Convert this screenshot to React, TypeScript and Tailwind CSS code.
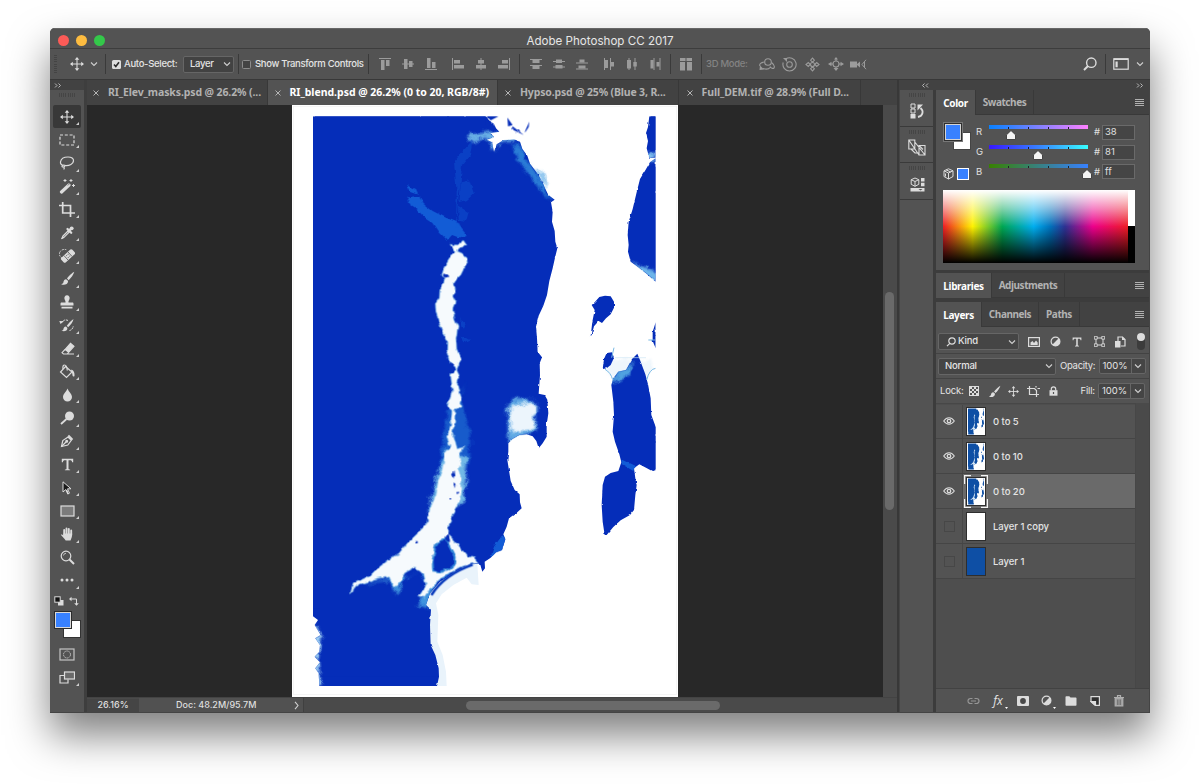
import React from "react";

const NAME = "font-['Noto_Sans',sans-serif] font-bold";

/* ---------- small drawing helpers ---------- */
type IconProps = { w?: number; h?: number; vb?: string; c?: string; sw?: number; children: React.ReactNode };
function Ico({ w = 16, h = w, vb, c = "#dcdcdc", sw = 1.2, children }: IconProps) {
  return (
    <svg width={w} height={h} viewBox={vb ?? `0 0 ${w} ${h}`} fill="none" stroke={c} strokeWidth={sw} className="block shrink-0">
      {children}
    </svg>
  );
}

const Chevron = () => (
  <Ico w={8} h={6} sw={1.1} c="#cfcfcf"><path d="M1 1.5 4 4.5 7 1.5" /></Ico>
);
const Sep = () => <div className="h-5 w-px shrink-0 bg-[#3a3a3a]" />;
const Grip = () => (
  <div className="flex h-[4px] w-[17px] justify-between">
    {Array.from({ length: 8 }, (_, i) => <div key={i} className="h-full w-px bg-[#454545]" />)}
  </div>
);
const DoubleAngle = ({ left = false }: { left?: boolean }) => (
  <Ico w={8} h={5} c="#b8b8b8" sw={1}>
    {left ? <path d="M3.5.5l-2 2 2 2M7 .5l-2 2 2 2" /> : <path d="M1 .5l2 2-2 2M4.500 .5l2 2-2 2" />}
  </Ico>
);
const MenuLines = () => (
  <div className="flex h-[7px] w-[9px] flex-col justify-between">
    {[0, 1, 2, 3].map((i) => <div key={i} className="h-px bg-[#b0b0b0]" />)}
  </div>
);

function MoveIcon({ s = 14 }: { s?: number }) {
  return (
    <Ico w={s} vb="0 0 14 14" sw={1.1}>
      <path d="M7 2v10M2 7h10" />
      <path d="M7 0l2.300 2.800H4.700zM7 14l2.300-2.800H4.700zM0 7l2.800-2.300v4.600zM14 7l-2.800-2.300v4.600z" fill="#dcdcdc" stroke="none" />
    </Ico>
  );
}
function BrushIcon({ s = 15 }: { s?: number }) {
  return (
    <Ico w={s} vb="0 0 15 15" sw={0}>
      <path d="M14.300.8c-2 .9-5.600 4.300-7.300 6.800l1.700 1.600C11 7.300 13.700 3.200 14.300.8zM6.200 8.300C4.300 8.500 3.600 9.700 3.400 11.300c-.1 1-.9 1.500-2.200 1.900 2.300 1.400 6.900.6 6.900-3.200z" fill="#dcdcdc" />
    </Ico>
  );
}
function TypeIcon({ s = 13 }: { s?: number }) {
  return (
    <Ico w={s} vb="0 0 13 13" sw={0}>
      <path d="M.8.8h11.400v3.400h-1.100c-.2-1.500-.7-2-2-2H7.500v8.200c0 .7.300.9 1.600 1v.9H3.900v-.9c1.300-.1 1.600-.3 1.600-1V2.200H3.900c-1.300 0-1.800.5-2 2H.8z" fill="#dcdcdc" />
    </Ico>
  );
}
const AdjustIcon = () => (
  <Ico w={11}><circle cx="5.500" cy="5.500" r="4.400" /><path d="M8.700 2.300A4.500 4.500 0 0 1 2.300 8.700z" fill="#dcdcdc" stroke="none" /></Ico>
);
const Eye = () => (
  <Ico w={12} h={8} sw={1.1}>
    <path d="M.7 4C2.400 1.700 4 .8 6 .8s3.600.9 5.300 3.200C9.600 6.300 8 7.200 6 7.200S2.400 6.300.7 4z" />
    <circle cx="6" cy="4" r="1.700" fill="#4a4a4a" strokeWidth="1.300" />
  </Ico>
);

/* ---------- elevation map ---------- */
const COAST =
  "M69 34H588L597 46 612 56 618 70 628 80 600 84 612 96 590 104 606 112 612 140 620 118 640 106 672 104 690 110 697 132 712 152 720 176 732 192 745 210 757 232 765 250 775 270 794 284 783 292 788 320 786 350 794 378 796 410 802 430 795 458 788 490 778 528 771 570 760 602 746 632 738 665 741 700 743 740 756 757 749 775 750 810 746 866 764 870 772 884 775 925 770 960 770 995 758 1015 746 1030 739 1008 728 994 710 988 688 990 667 1002 655 1015 655 1040 652 1065 656 1090 662 1128 674 1155 689 1168 690 1192 695 1210 682 1222 657 1240 650 1265 640 1288 646 1303 636 1335 618 1342 600 1360 584 1370 585 1390 577 1400 570 1376 545 1378 500 1398 450 1430 420 1465 408 1500 423 1514 420 1560 422 1620 436 1650 446 1690 447 1715 441 1743H88L86 1705 76 1690 90 1672 74 1655 88 1640 90 1620 76 1600 92 1590 74 1560 84 1545 69 1534Z";
const EAST = [
  "M1078 34H1097V158H1078L1070 130 1074 108 1068 84 1074 66Z",
  "M1097 160L1080 172 1066 196 1050 222 1040 262 1028 312 1016 350 1013 390 1016 420 1014 440 1022 470 1044 486 1070 506 1097 530Z",
  "M914 592L928 576 945 572 962 574 972 590 972 608 962 628 948 640 936 654 926 648 912 664 905 690 902 694 907 650 914 615 905 600Z",
  "M1097 652L1088 680 1088 708 1097 730Z",
  "M938 792L942 762 950 744 966 742 972 758 962 780 950 790Z",
  "M970 820L985 800 1008 795 1026 762 1042 746 1050 765 1066 808 1074 838 1082 880 1084 930 1097 965V1096L1086 1098 1068 1088 1048 1078 1032 1090 1036 1120 1040 1140 1036 1170 1032 1215 1020 1230 992 1246 970 1266 950 1290 944 1290 938 1250 935 1200 938 1140 945 1115 962 1104 985 1098 994 1072 988 1048 975 1010 968 980 972 930 970 890 964 840Z",
];
const RIVER = [
  "M480 418L500 420 520 406 530 420 512 430 500 438 515 444 530 458 532 476 522 490 512 510 500 522 490 538 496 566 488 574 496 590 488 610 494 640 504 664 498 700 500 730 512 765 504 784 500 795 508 812 502 840 508 868 514 890 512 908 495 912 494 950 488 982 496 1010 502 1032 528 1025 508 1048 514 1080 506 1090 512 1110 514 1170 506 1192 488 1225 478 1256 474 1288 486 1300 506 1322 532 1354 552 1358 566 1374 545 1376 510 1386 480 1402 448 1424 420 1452 404 1478 386 1472 408 1440 402 1410 376 1386 344 1404 326 1440 310 1446 298 1416 262 1420 236 1430 200 1440 180 1468 190 1436 240 1412 262 1390 300 1362 326 1346 352 1314 384 1284 410 1256 420 1210 438 1170 444 1130 456 1094 466 1040 480 1024 470 995 482 960 486 916 472 906 478 884 488 862 482 810 496 796 492 784 472 760 474 712 460 688 446 652 438 620 436 596 448 580 450 546 466 522 456 508 464 482 480 456 496 440Z",
];

function Terrain({ fill, river = "#f8fbfe" }: { fill: string; river?: string }) {
  return (
    <>
      <path d={COAST} fill={fill} />
      {EAST.map((d, i) => <path key={i} d={d} fill={fill} />)}
      {RIVER.map((d, i) => <path key={i} d={d} fill={river} />)}
    </>
  );
}

function ElevationMap() {
  return (
    <svg width="386" height="592" viewBox="6 0 1158 1776" className="block bg-white">
      <defs>
        <filter id="rough" x="0" y="0" width="1170" height="1776" filterUnits="userSpaceOnUse" colorInterpolationFilters="sRGB">
          <feTurbulence type="fractalNoise" baseFrequency="0.05" numOctaves="3" seed="4" result="n" />
          <feDisplacementMap in="SourceGraphic" in2="n" scale="13" xChannelSelector="R" yChannelSelector="G" />
        </filter>
        <filter id="coast" x="0" y="0" width="1170" height="1776" filterUnits="userSpaceOnUse" colorInterpolationFilters="sRGB">
          <feTurbulence type="fractalNoise" baseFrequency="0.06" numOctaves="2" seed="4" result="n" />
          <feDisplacementMap in="SourceGraphic" in2="n" scale="7" xChannelSelector="R" yChannelSelector="G" />
        </filter>
        <filter id="haze" x="0" y="0" width="1170" height="1776" filterUnits="userSpaceOnUse" colorInterpolationFilters="sRGB">
          <feGaussianBlur stdDeviation="5" result="b" />
          <feTurbulence type="fractalNoise" baseFrequency="0.04" numOctaves="3" seed="8" result="n" />
          <feDisplacementMap in="b" in2="n" scale="26" xChannelSelector="R" yChannelSelector="G" />
        </filter>
        <clipPath id="frame"><rect x="69" y="34" width="1028" height="1709" /></clipPath>
        <clipPath id="land"><path d={COAST} />{EAST.map((d, i) => <path key={i} d={d} />)}</clipPath>
      </defs>
      <rect x="10" y="4" width="1150" height="1764" stroke="#f0f0f0" strokeWidth="2" fill="none" />
      <g clipPath="url(#frame)">
        <path d="M408 1500L425 1465 455 1430 500 1400 545 1380 562 1378 566 1440 545 1438 530 1418 490 1440 455 1468 438 1495 445 1530 442 1610 458 1650 468 1700 470 1743H430L440 1700 420 1620Z" fill="#e9f3fb" />
        <path d="M958 762L1085 764 1090 790 1072 815H965L948 795Z" fill="#eef6fc" filter="url(#haze)" />
        <path d="M700 150L730 185 750 225 768 262 764 214 742 194 716 172Z" fill="#8cc4ee" filter="url(#haze)" />
        <g filter="url(#coast)">
          <path d={COAST} fill="#052db9" />
          {EAST.map((d, i) => <path key={i} d={d} fill="#052db9" />)}
        </g>
        {/* straight survey edges stay crisp */}
        <path d="M69 34H586V60H69ZM69 34H90V1510H69ZM92 1715H438V1743H92ZM1082 34H1097V135H1082ZM1085 185H1097V505H1085ZM1090 965H1097V1092H1090Z" fill="#052db9" />
        <g clipPath="url(#land)">
          {/* mid-depth shelves */}
          <g filter="url(#rough)" fill="#125cd6">
            <path d="M350 292L358 276 392 272 400 296 428 318 468 338 498 350 530 390 508 398 486 390 472 406 450 384 430 354 400 334 376 308Z" />
            <path d="M350 240L378 252 384 266 360 258Z" />
            <path d="M512 232L538 226 552 266 530 286 508 292ZM504 302L536 322 528 350 506 348ZM512 640L530 656 522 674 510 664ZM512 690L540 706 520 716Z" opacity=".4" />
            <path d="M492 170L530 125 548 105 540 150 516 180 512 230 504 290 500 340 512 370 498 366 500 260Z" opacity=".4" />
            <path d="M600 1360L612 1325 640 1286 650 1310 636 1340Z" />
            <path d="M994 1062L1036 1082 1030 1098 996 1078Z" />
          </g>
          {/* pale shoals */}
          <g filter="url(#haze)">
            <path d="M530 92L545 110 590 98 602 118 612 140 625 112 690 104 688 90 600 80Z" fill="#6bb2e6" />
            <path d="M668 116L700 126 716 176 740 196 768 246 780 286 760 266 736 232 704 196 680 156Z" fill="#2a7cd6" />
            <path d="M470 920L450 1080 420 1230 470 1260 540 1060 540 980 510 880 530 830 500 890Z" fill="#1b66d0" opacity=".8" />
            <path d="M190 1440L300 1425 320 1470 350 1410 400 1400 410 1450 380 1500 420 1510 440 1430 480 1400 530 1360 500 1380Z" fill="#3f93de" />
            <path d="M474 1030L450 1090 424 1180 415 1240 450 1210 522 1190 532 1060Z" fill="#71b8e6" />
            <path d="M652 905L668 880 740 885 738 982 655 1012Z" fill="#5fa9e4" />
            <path d="M660 905L736 890 732 974 662 982Z" fill="#ecf5fc" />
            <path d="M958 832L986 796 1026 768 1016 812 990 826Z" fill="#50a2e0" />
            <path d="M1022 474L1097 548V498Z" fill="#6db6ea" />
            <path d="M60 1530L96 1600 84 1660 94 1743H60Z" fill="#9ccdf2" />
            <path d="M1066 145H1100V172H1076Z" fill="#7dbcec" />
          </g>
          <g filter="url(#rough)">
            {RIVER.map((d, i) => <path key={i} d={d} fill="#f6fafd" stroke="#7cbbe9" strokeWidth="2" />)}
            <path d="M592 32H700L690 50 706 64 694 96 660 92 640 104 612 100 632 80 610 58Z" fill="#fff" />
          </g>
          <g filter="url(#rough)" fill="#052db9">
            <path d="M430 1400L428 1370 436 1325 450 1305 466 1302 480 1328 494 1356 492 1378 476 1392 450 1402Z" stroke="#3387d8" strokeWidth="6" />
            <path d="M464 1294l12-4 4 16-12 4zM458 512q12-12 20 2l-8 8zM376 1308h7v7h-7z" />
            <path d="M486 1108l8-8 2 12-4 8zM490 1136l7 3-4 7zM478 1180h6v4h-6zM500 1160l5 6-6 4z" />
          </g>
        </g>
        <path d="M424 1470Q464 1408 548 1379" stroke="#0b3cbc" strokeWidth="8" fill="none" />
        <g filter="url(#coast)" fill="#052db9">
          <path d="M706 76L718 50 716 66 704 84ZM652 38L668 60 654 64ZM590 34H625L602 46ZM668 64L702 90 664 72Z" />
        </g>
        <path d="M740 192L768 208 770 240 750 224" fill="none" stroke="#a9d3f2" strokeWidth="2" />
        <path d="M965 758L972 728M1070 825Q1078 792 1097 790M945 793Q962 802 968 824M1075 705H1096" fill="none" stroke="#7ab9e4" strokeWidth="3" />
        <path d="M975 758H1068" stroke="#cfe5f5" strokeWidth="2" />
      </g>
    </svg>
  );
}

/* ---------- tools ---------- */
const G = "#dcdcdc";
const TOOLS: { name: string; el: React.ReactNode; tri?: boolean }[] = [
  { name: "move", el: <MoveIcon /> },
  { name: "marquee", el: <Ico w={16} h={12}><rect x="1" y="1" width="14" height="10" strokeDasharray="3 1.800" /></Ico> },
  { name: "lasso", el: <Ico w={16} h={14}><path d="M4.500 9.500C2 8.800 1.200 7.500 1.500 5.800 2 3 5 1 9 1c3.500 0 5.700 1.500 5.500 3.900C14.300 8 10.500 9.800 6.500 9.600 5.500 9 3 8.800 3 10.200c0 1.300 2.500 1 3-.6M4.500 10.800c1 .8 1 1.700.2 2.700" /></Ico> },
  { name: "wand", el: <Ico w={16} h={15}><path d="M2.500 13 10 6" strokeWidth="3.200" strokeLinecap="round" /><path d="M8.800 6.500 11 4.300" stroke="#535353" strokeWidth=".7" /><path d="M12 0v3M10.500 1.500h3M6 0v3M4.500 1.500h3M14.500 5v3M13 6.500h3" strokeWidth="1" /></Ico> },
  { name: "crop", el: <Ico w={16} h={15} sw={1.7}><path d="M3.700 0v11H16M0 3.500h11.500V15" /></Ico> },
  { name: "eyedropper", el: <Ico w={14} h={14}><path d="M8.500 4.500 3 10c-.6.700-.3 1.700-1.700 2.800C2.300 12 3.600 11.800 4.200 11.200L9.700 5.700" /><path d="M7.500 3l3.700 3.700M8.300 5.300 11.500 2.300" strokeWidth="2.300" strokeLinecap="round" /><circle cx="11.700" cy="2.300" r="1.900" fill={G} stroke="none" /></Ico> },
  { name: "heal", el: <Ico w={16} h={15}><g transform="rotate(-42 9 8)"><rect x="1.500" y="4.800" width="15" height="6.400" rx="1.500" fill={G} stroke="none" /><path d="M6.300 5v6M11.700 5v6" stroke="#6a6a6a" strokeWidth=".9" /><path d="M7.700 6.800h3M7.700 9.200h3" stroke="#6a6a6a" strokeWidth="1" strokeDasharray="1 1" /></g><path d="M3 10A5 4.500 0 0 1 8 2" strokeDasharray="1.500 1" strokeWidth="1" /></Ico> },
  { name: "brush", el: <BrushIcon /> },
  { name: "stamp", el: <Ico w={14} h={14} sw={0}><path d="M7 .3a2.700 2.700 0 0 1 2.500 3.600C9 5.300 8.300 6 8.500 7.500h3.800c.8 0 1.200.5 1.200 1.300v1.700H.5V8.800c0-.8.400-1.300 1.200-1.300h3.800C5.700 6 5 5.300 4.500 3.900A2.700 2.700 0 0 1 7 .3zM1.500 11.700h11v1.800h-11z" fill={G} /></Ico> },
  { name: "history-brush", el: <Ico w={16} h={14} sw={1}><path d="M14.500 1C12 2.500 9 6 7.800 7.800l1.300 1.400C11.500 7.500 14 4 14.500 1zM7 8.500c-2 .1-2.300 1.500-2.600 2.700-.1.900-.9 1.200-2 1.600 2.200 1 6.300.6 6-2.800z" fill={G} stroke="none" /><path d="M9 2.500C7 1.500 4.500 1.800 3 4M10.500 12.500c2.500-.500 3.500-2.500 3.800-4.500" strokeDasharray="2 .8" /><path d="M.3 3l4.700.2L1.500 6z" fill={G} stroke="none" /></Ico> },
  { name: "eraser", el: <Ico w={15} h={13} sw={1.100}><path d="M5 7.500 10.500 1.300 14 4.300 8.700 10.300z" fill={G} /><path d="M5 7.500 2 10.700 3.500 12h3.700l1.500-1.700M7 12h7" /></Ico> },
  { name: "bucket", el: <Ico w={16} h={15}><path d="M6.500 2.500 13 8l-5.500 5.500L1.500 8z" /><path d="M4 5c-.5-3 .5-4 1.500-4S8 2.500 8.300 6.500" /><path d="M12.500 5.500C15 6.500 15.700 9 15.500 12c-.7.900-1.700.600-1.900-.200C13.400 10 13 8 12 7z" fill={G} stroke="none" /></Ico> },
  { name: "blur", el: <Ico w={11} h={14} sw={0}><path d="M5.500.5C6.500 3.500 10 6 10 9a4.500 4.500 0 0 1-9 0C1 6 4.500 3.500 5.500.5z" fill={G} /></Ico> },
  { name: "dodge", el: <Ico w={15} h={14}><circle cx="9.500" cy="5" r="4.500" fill={G} stroke="none" /><path d="M6.500 8 1 13" strokeWidth="1.800" /></Ico> },
  { name: "pen", el: <Ico w={14} h={14}><path d="M1.500 12.500 2.800 6.500 8 3l3.300 3.300L7.800 11z" /><path d="M1.500 12.500 6 8" /><circle cx="6.700" cy="7.300" r=".9" fill={G} /><path d="M8.300 1.500l4.200 4.200" strokeWidth="2" /></Ico> },
  { name: "type", el: <TypeIcon /> },
  { name: "path-select", el: <Ico w={10} h={14} sw={1}><path d="M1 .8V11L3.800 8.500l2 4.500 1.700-.8-2-4.400H9z" fill="#1a1a1a" /><path d="M4.500 9l1.800 4" strokeWidth="1.500" /></Ico> },
  { name: "rectangle", el: <Ico w={15} h={12}><rect x="1" y="1" width="13" height="10" fill="#7b7b7b" /></Ico> },
  { name: "hand", el: <Ico w={14} h={14} sw={1.900}><path d="M4.200 8V3M6.500 7V1.500M8.800 7V2M11.200 8V3.500" strokeLinecap="round" /><path d="M3.300 6.500h8.800c.2 3-.6 4.500-1.600 6.900H5.700C4.500 11.500 2 9.500.8 7.800c.600-.8 1.700-.3 2.500.7z" fill={G} stroke="none" /></Ico> },
  { name: "zoom", el: <Ico w={15} h={15}><circle cx="6" cy="6" r="4.800" /><path d="M9.500 9.500 14 14" strokeWidth="2" /><path d="M3.500 5.500A2.500 2.500 0 0 1 6 3.300" strokeWidth=".8" /></Ico>, tri: false },
  { name: "more", el: <Ico w={14} h={4} sw={0}><circle cx="2" cy="2" r="1.500" fill={G} /><circle cx="7" cy="2" r="1.500" fill={G} /><circle cx="12" cy="2" r="1.500" fill={G} /></Ico> },
];

function Tool({ el, on, tri = true }: { el: React.ReactNode; on?: boolean; tri?: boolean }) {
  return (
    <div className={`relative flex h-[23.2px] w-[28px] items-center justify-center ${on ? "rounded-[2px] bg-[#383838]" : ""}`}>
      {el}
      {tri && (
        <svg width="3" height="3" className="absolute right-[2px] bottom-[3px]"><path d="M3 0v3H0z" fill="#d0d0d0" /></svg>
      )}
    </div>
  );
}

function Toolbar() {
  return (
    <div className="flex w-[37px] shrink-0 flex-col border-r-[3px] border-[#3e3e3e] bg-[#535353]">
      <div className="flex h-[10px] items-center bg-[#424242] pl-[4px]"><DoubleAngle /></div>
      <div className="flex h-[15px] items-start justify-center pt-[3px]"><Grip /></div>
      <div className="flex flex-col items-center">
        {TOOLS.map((t, i) => <Tool key={t.name} el={t.el} on={i === 0} tri={t.tri} />)}
      </div>
      <div className="flex h-[19px] items-center justify-between pr-[5px] pl-[4px]">
        <Ico w={10} h={10} sw={1}><rect x="4" y="4" width="5.500" height="5.500" fill={G} stroke="none" /><rect x=".8" y=".8" width="5.400" height="5.400" fill="#111" /></Ico>
        <Ico w={10} h={10} sw={1}><path d="M2 3h5.500v5" /><path d="M0 3l2.500-2.300v4.600zM7.500 9.800 5.200 7.300h4.600z" fill={G} stroke="none" /></Ico>
      </div>
      <div className="relative ml-[4px] h-[28px] w-[28px]">
        <div className="absolute right-[1px] bottom-[1px] h-[18px] w-[18px] border border-[#333] bg-white" />
        <div className="absolute top-0 left-0 h-[18px] w-[18px] border border-[#2c2c2c] bg-[#d8d8d8] p-[1px]"><div className="h-full w-full bg-[#3881ff]" /></div>
      </div>
      <div className="flex flex-col items-center pt-[4px]">
        <Tool tri={false} el={<Ico w={16} h={13} c="#c4c4c4"><rect x="1" y="1" width="14" height="11" /><circle cx="8" cy="6.500" r="3.500" strokeDasharray="1.500 .7" strokeWidth="1" /></Ico>} />
        <Tool el={<Ico w={16} h={13}><rect x="5.500" y="1" width="10" height="7" fill="#6a6a6a" /><path d="M5 4.500H1V12h8V8.500" /></Ico>} />
      </div>
    </div>
  );
}

/* ---------- options bar ---------- */
const A = "#9b9b9b";
function AlignIcon({ k }: { k: number }) {
  const r = (x: number, y: number, w: number, h: number, key: number) => <rect key={key} x={x} y={y} width={w} height={h} fill={A} />;
  const sets: number[][][] = [
    [[0, 0, 12, 1], [2, 2, 3.5, 10], [7, 2, 3.5, 6]],
    [[0, 5.5, 12, 1], [2, 1, 3.5, 10], [7, 3, 3.5, 6]],
    [[0, 11, 12, 1], [2, 0, 3.5, 10], [7, 4, 3.5, 6]],
    [[0, 0, 1, 12], [2, 2, 6, 3.5], [2, 7, 10, 3.5]],
    [[5.5, 0, 1, 12], [3, 2, 6, 3.5], [1, 7, 10, 3.5]],
    [[11, 0, 1, 12], [4, 2, 6, 3.5], [0, 7, 10, 3.5]],
    [[0, 1, 12, 1], [2.5, 2, 7, 3], [0, 7, 12, 1], [2.5, 8, 7, 3]],
    [[0, 3, 12, 1], [3, 1.5, 6, 3.5], [0, 8.5, 12, 1], [2.5, 7, 7, 3.5]],
    [[0, 4.5, 12, 1], [3.5, 1.5, 5, 3], [0, 10.5, 12, 1], [2.5, 7.5, 7, 3]],
    [[1, 0, 1, 12], [2, 2, 3, 8], [7, 0, 1, 12], [8, 4, 3, 4.5]],
    [[2.5, 0, 1, 12], [1, 2, 4, 8.5], [8.5, 0, 1, 12], [7.3, 4, 3.5, 4.5]],
    [[4.5, 0, 1, 12], [1.5, 2, 3, 8.5], [10.5, 0, 1, 12], [7.5, 4, 3, 4.5]],
  ];
  return <Ico w={12} h={12} sw={0}>{sets[k].map((s, i) => r(s[0], s[1], s[2], s[3], i))}</Ico>;
}
const Cell = ({ children }: { children: React.ReactNode }) => (
  <div className="flex w-[23px] shrink-0 items-center justify-center">{children}</div>
);

function OptionsBar() {
  return (
    <div className="flex h-[31px] shrink-0 items-center border-b border-[#383838] bg-[#535353] font-[Inter,sans-serif] text-[9.500px] font-medium tracking-[-0.032em] whitespace-nowrap text-[#e4e4e4]">
      <div className="flex h-[18px] w-[8px] shrink-0 flex-col justify-between pl-[4px]">
        {Array.from({ length: 9 }, (_, i) => <div key={i} className="h-px w-[3px] bg-[#444]" />)}
      </div>
      <div className="ml-[12px]"><MoveIcon /></div>
      <div className="ml-[6px]"><Chevron /></div>
      <div className="ml-[7px]"><Sep /></div>
      <div className="ml-[6px] flex h-[9px] w-[9px] shrink-0 items-center justify-center rounded-[1.500px] bg-[#dcdcdc]">
        <Ico w={7} h={7} c="#2c2c2c" sw={1.600}><path d="M1 3.500 2.800 5.500 6 1.200" /></Ico>
      </div>
      <span className="ml-[3px] w-[54px] shrink-0">Auto-Select:</span>
      <div className="ml-[5px] flex h-[17px] w-[51px] shrink-0 items-center justify-between rounded-[2px] border border-[#666] bg-[#424242] pr-[2px] pl-[6px]">
        <span>Layer</span><Chevron />
      </div>
      <div className="ml-[4px]"><Sep /></div>
      <div className="ml-[3px] h-[9px] w-[9px] shrink-0 rounded-[1.500px] border border-[#8c8c8c] bg-[#444]" />
      <span className="ml-[4px] w-[109px] shrink-0">Show Transform Controls</span>
      <div className="ml-[4px]"><Sep /></div>
      <div className="ml-[4px] flex">{[0, 1, 2].map((k) => <Cell key={k}><AlignIcon k={k} /></Cell>)}</div>
      <div className="ml-[4px] flex">{[3, 4, 5].map((k) => <Cell key={k}><AlignIcon k={k} /></Cell>)}</div>
      <div className="ml-[4px]"><Sep /></div>
      <div className="ml-[4px] flex">{[6, 7, 8].map((k) => <Cell key={k}><AlignIcon k={k} /></Cell>)}</div>
      <div className="ml-[4px] flex">{[9, 10, 11].map((k) => <Cell key={k}><AlignIcon k={k} /></Cell>)}</div>
      <div className="ml-[4px]"><Sep /></div>
      <div className="flex w-[30px] justify-center">
        <Ico w={12} h={13} sw={0}><path d="M0 0h5v3H0zM7 0h5v3H7zM0 4h5v8.500H0zM7 4h5v8.500H7z" fill={A} /><path d="M5 0h2v3H5z" fill="#777" /></Ico>
      </div>
      <Sep />
      <span className="ml-[4px] w-[41px] shrink-0 text-[#838383]">3D Mode:</span>
      <div className="ml-[8px] flex">
        <Cell><Ico w={16} h={13} c={A} sw={1.100}><circle cx="9" cy="4" r="3.300" /><path d="M5.500 4C2 4.500 0 6 1 8M4 10.500c3 1 6 .5 7-1M12.500 4.500c2.500 2 3.500 4 2.500 5.500-1 1-3 0-4-1.500" /><path d="M1 7.500l4 4-4.500.5z" fill={A} stroke="none" /></Ico></Cell>
        <Cell><Ico w={15} h={15} c={A} sw={1.100}><circle cx="7.500" cy="7.500" r="2.800" /><path d="M4 1.800A6.600 6.600 0 1 1 1.200 5.500" /><path d="M1 1h4v4z" fill={A} stroke="none" /></Ico></Cell>
        <Cell><Ico w={15} h={15} c={A} sw={1.100}><path d="M7.500 5.200 5.600 3.300 7.500 1l1.900 2.300zM7.500 9.800l-1.900 1.900L7.500 14l1.900-2.300zM5.200 7.500 3.300 5.600 1 7.500l2.300 1.900zM9.800 7.500l1.900-1.900L14 7.500l-2.300 1.900z" /><circle cx="7.500" cy="7.500" r="2" /></Ico></Cell>
        <Cell><Ico w={16} h={14} c={A} sw={1.100}><circle cx="8" cy="7" r="3" /><path d="M8 0l2 2.500H6zM8 14l2.500-3h-5zM0 7l3.500-2.200v4.400zM16 7l-3.500-2.200v4.400z" fill={A} stroke="none" /><path d="M3 7h2M11 7h2M8 2v2M8 10v2" /></Ico></Cell>
        <Cell><Ico w={17} h={11} c={A} sw={1}><path d="M0 2.500h7v6H0zM7 5l3-2.500v6L7 6z" fill={A} stroke="none" /><path d="M16 .8 12 5.500l4 4.700M14.500 3v5" /></Ico></Cell>
      </div>
      <div className="mr-[8px] ml-auto"><Ico w={14} h={14} sw={1.400}><circle cx="8.300" cy="5.700" r="4.700" /><path d="M5 9 1 13" strokeWidth="1.900" /></Ico></div>
      <Sep />
      <div className="ml-[7px]"><Ico w={16} h={12}><rect x=".8" y=".8" width="14.400" height="10.400" /><path d="M1 1.300h14" strokeWidth="1.500" /><path d="M2.500 3.500h2.200v5.800H2.500z" fill={G} stroke="none" /></Ico></div>
      <div className="mr-[6px] ml-[7px]"><Chevron /></div>
    </div>
  );
}

/* ---------- document ---------- */
function DocTab({ label, cls, on = false }: { label: string; cls: string; on?: boolean }) {
  return (
    <div className={`flex shrink-0 items-center border-r border-[#383838] text-[10.500px] ${NAME} ${cls} ${on ? "bg-[#535353] text-white" : "bg-[#424242] text-[#b2b2b2]"}`}>
      <Ico w={6} h={6} c="#b4b4b4" sw={1}><path d="M.5.5l5 5M5.500.5l-5 5" /></Ico>
      <span className="ml-[9px] pt-[1px] whitespace-nowrap">{label}</span>
    </div>
  );
}

function DocumentArea() {
  return (
    <div className="flex w-[812px] shrink-0 flex-col border-r-2 border-[#383838]">
      <div className="flex h-[25px] shrink-0 bg-[#424242]">
        <DocTab label="RI_Elev_masks.psd @ 26.2% (..." cls="w-[181px] pl-[6px] tracking-[-0.01em]" />
        <DocTab label="RI_blend.psd @ 26.2% (0 to 20, RGB/8#)" cls="w-[230px] pl-[6.500px] tracking-[-0.002em]" on />
        <DocTab label="Hypso.psd @ 25% (Blue 3, R..." cls="w-[181px] pl-[7px] tracking-[-0.015em]" />
        <DocTab label="Full_DEM.tif @ 28.9% (Full D..." cls="w-[182px] pl-[7.500px] tracking-[-0.01em]" />
      </div>
      <div className="flex h-[592px] shrink-0">
        <div className="flex flex-1 bg-[#282828] pl-[205px]"><ElevationMap /></div>
        <div className="w-[14px] bg-[#4a4a4a] pt-[187px] pl-[2px]"><div className="h-[218px] w-[9px] rounded-full bg-[#6a6a6a]" /></div>
      </div>
      <div className="flex h-[16px] shrink-0 items-center border-t border-[#434343] bg-[#4a4a4a] font-[Inter,sans-serif] text-[9px] font-medium text-[#dedede]">
        <div className="flex h-[14px] w-[52px] items-center justify-center bg-[#454545] pb-[2px]">26.16%</div>
        <div className="flex h-full w-[165px] items-center border-r border-[#404040] bg-[#515151] pr-[4px] pb-[1px] pl-[37px] whitespace-nowrap">
          <span>Doc: 48.2M/95.7M</span>
          <div className="ml-auto"><Ico w={5} h={9} c="#d0d0d0" sw={1.100}><path d="M1 .8 4 4.500 1 8.200" /></Ico></div>
        </div>
        <div className="mb-[1px] ml-[162px] h-[9px] w-[254px] rounded-full bg-[#6a6a6a]" />
      </div>
    </div>
  );
}

/* ---------- panels ---------- */
function PanelTabs({ tabs }: { tabs: { label: string; cls: string }[] }) {
  return (
    <div className="flex h-[25px] shrink-0 items-stretch bg-[#424242]">
      {tabs.map((t, i) => (
        <div key={t.label} className={`flex items-center justify-center border-r border-[#393939] pt-[1px] ${NAME} ${t.cls} ${i === 0 ? "bg-[#535353] text-[10px] tracking-[-0.035em] text-white" : "border-b text-[10px] tracking-[-0.045em] text-[#b2b2b2]"}`}>{t.label}</div>
      ))}
      <div className="flex flex-1 items-center justify-end border-b border-[#393939] pr-[5px]"><MenuLines /></div>
    </div>
  );
}

const CHANNELS = [
  { n: "R", v: "38", bar: "bg-[linear-gradient(90deg,#0a81ff,#3881ff_22%,#9a81ff_60%,#ff81ff)]", pad: "pl-[16.500px]" },
  { n: "G", v: "81", bar: "bg-[linear-gradient(90deg,#3818ff,#3881ff_50%,#38ffff)]", pad: "pl-[44px]" },
  { n: "B", v: "ff", bar: "bg-[linear-gradient(90deg,#388100,#388180_50%,#3881ff)]", pad: "pl-[92.500px]" },
];

function ColorPanel() {
  return (
    <div className="flex h-[155px] shrink-0 flex-col bg-[#535353]">
      <div className="flex h-[75px]">
        <div className="flex w-[40px] flex-col pt-[8px] pl-[8px]">
          <div className="relative h-[28px] w-[28px]">
            <div className="absolute right-[1px] bottom-[1px] h-[18px] w-[18px] border border-[#444] bg-white" />
            <div className="absolute top-0 left-0 h-[18px] w-[18px] border border-[#2f2f2f] bg-[#d4d4d4] p-[1px] outline-1 outline-[#777]"><div className="h-full w-full bg-[#3881ff]" /></div>
          </div>
          <div className="mt-[17px] -ml-[1px] flex items-center">
            <Ico w={11} h={12} sw={1}><path d="M5.500.8 10 2.800v5.700L5.500 11 1 8.500V2.800zM1 2.800 5.500 5 10 2.800M5.500 5v6M3 1.800 7.800 4M2.500 5.500v3" /></Ico>
            <div className="ml-[3px] h-[12px] w-[12px] border border-white bg-[#3881ff]" />
          </div>
        </div>
        <div className="flex flex-col pt-[7.500px] font-[Inter,sans-serif] text-[9.500px] text-[#e0e0e0]">
          {CHANNELS.map((c) => (
            <div key={c.n} className="flex h-[19.700px] items-center">
              <span className="w-[13px]">{c.n}</span>
              <div className="flex w-[99px] flex-col">
                <div className={`flex h-[4px] justify-evenly ${c.bar}`}>
                  {[0, 1, 2, 3].map((i) => <div key={i} className="mt-[2px] h-[2px] w-px bg-[#222]" />)}
                </div>
                <div className={`h-[11px] pt-[1px] ${c.pad}`}>
                  <Ico w={10} h={10} c="#3a3a3a" sw={0.900}><path d="M5 .5 9.500 4.800V9.500H.5V4.800z" fill="#f4f4f4" /></Ico>
                </div>
              </div>
              <span className="ml-[6px] w-[8px]">#</span>
              <div className="flex h-[15px] w-[33px] items-center border border-[#6a6a6a] bg-[#454545] pl-[2px]">{c.v}</div>
            </div>
          ))}
        </div>
      </div>
      <div className="ml-[7px] flex h-[72.500px] w-[192px]">
        <div className="flex-1 bg-[linear-gradient(180deg,#fff_0%,rgba(255,255,255,0.5)_26%,rgba(255,255,255,0)_50%,rgba(0,0,0,0)_50%,rgba(0,0,0,0.5)_75%,#000_100%),linear-gradient(90deg,#ed1c24,#fff200_16%,#00a651_32%,#00aeef_49%,#0072bc_58%,#2e3192_66%,#ec008c_81%,#ed1c24)]" />
        <div className="flex w-[7.500px] flex-col"><div className="h-1/2 bg-white" /><div className="h-1/2 bg-black" /></div>
      </div>
    </div>
  );
}

function Percent() {
  return (
    <div className="flex h-[16px] w-[47px] shrink-0 rounded-[2px] border border-[#666] bg-[#454545]">
      <div className="flex w-[32px] items-center border-r border-[#666] pl-[3px] tracking-normal">100%</div>
      <div className="flex flex-1 items-center justify-center"><Chevron /></div>
    </div>
  );
}
const Slot = ({ cls, children }: { cls: string; children: React.ReactNode }) => (
  <div className={`flex shrink-0 items-center justify-center ${cls}`}>{children}</div>
);

const LAYERS = [
  { name: "0 to 5", kind: "map", on: true },
  { name: "0 to 10", kind: "map", on: true },
  { name: "0 to 20", kind: "map", on: true, sel: true },
  { name: "Layer 1 copy", kind: "white", on: false },
  { name: "Layer 1", kind: "blue", on: false },
];

function LayerRow({ l }: { l: (typeof LAYERS)[number] }) {
  return (
    <div className={`flex h-[34.900px] items-center border-b border-[#454545] ${l.sel ? "bg-[#6a6a6a]" : "bg-[#535353]"}`}>
      <div className={`flex h-full w-[27px] items-center justify-center border-r border-[#474747] ${l.sel ? "bg-[#535353]" : ""}`}>
        {l.on ? <Eye /> : <div className="h-[11px] w-[11px] border border-[#474747]" />}
      </div>
      <div className="relative ml-[3px] flex h-[29px] w-[20px] items-center justify-center">
        <div className={`h-[29px] w-[20px] border border-[#2e2e2e] ${l.kind === "blue" ? "bg-[#0e4fa5]" : "bg-white"}`}>
          {l.kind === "map" && (
            <svg width="18" height="27" viewBox="6 0 1158 1776" preserveAspectRatio="none" className="block"><Terrain fill="#0e4fa5" river="#d6e6f5" /></svg>
          )}
        </div>
        {l.sel && (
          <svg width="24" height="33" className="absolute -top-[2px] -left-[2px]" fill="none" stroke="#f4f4f4" strokeWidth="1.200">
            <path d="M.6 9V.6H7M17 .6h6.400V9M23.400 24v8.400H17M7 32.400H.6V24" />
          </svg>
        )}
      </div>
      <span className="ml-[7px] pt-[2px]">{l.name}</span>
    </div>
  );
}

function LayersPanel() {
  return (
    <div className="flex min-h-0 flex-1 flex-col bg-[#535353] font-[Inter,sans-serif] text-[9.500px] text-[#e4e4e4]">
      <div className="flex h-[27px] shrink-0 items-center border-b border-[#434343] pt-[3px] pl-[2px]">
        <div className="flex h-[17px] w-[81px] shrink-0 items-center rounded-[2px] border border-[#666] bg-[#454545] pr-[2px] pl-[7px] font-medium tracking-[-0.02em]">
          <Ico w={10} h={10} sw={1.200}><circle cx="6" cy="4" r="3.200" /><path d="M3.800 6.300 1 9.200" /></Ico>
          <span className="mr-auto ml-[2px]">Kind</span><Chevron />
        </div>
        <Slot cls="ml-[4px] w-[22px]"><Ico w={12} h={10}><rect x=".6" y=".6" width="10.800" height="8.800" /><path d="M2.500 8V5.500L4.500 4l1.500 2L8 3.500l1.700 2V8z" fill={G} stroke="none" /></Ico></Slot>
        <Slot cls="w-[21px]"><AdjustIcon /></Slot>
        <Slot cls="w-[22px]"><TypeIcon s={10} /></Slot>
        <Slot cls="w-[22px]"><Ico w={11} h={11} sw={1}><rect x="2" y="2" width="7" height="7" /><path d="M.3.3h2.900v2.900H.3zM7.800.3h2.900v2.900H7.800zM.3 7.800h2.900v2.900H.3zM7.800 7.800h2.900v2.900H7.800z" fill="#535353" strokeWidth=".9" /></Ico></Slot>
        <Slot cls="w-[21px]"><Ico w={11} h={12}><path d="M3 5V1h4.500L10 3.500V10H6" /><path d="M0 5h5.500v6.500H0zM7 .5v3.500h3.500z" fill={G} stroke="none" /></Ico></Slot>
        <Slot cls="w-[20px]"><div className="h-[17px] w-[8px] rounded-full bg-[#3c3c3c]"><div className="h-[8px] w-[8px] rounded-full bg-[#dedede]" /></div></Slot>
      </div>
      <div className="flex h-[25px] shrink-0 items-center border-b border-[#434343] pl-[2px]">
        <div className="flex h-[17px] w-[118px] shrink-0 items-center justify-between rounded-[2px] border border-[#666] bg-[#454545] pr-[2px] pl-[6px] font-medium tracking-[-0.02em]">Normal<Chevron /></div>
        <span className="ml-[4px] w-[38.500px] tracking-[-0.03em] whitespace-nowrap">Opacity:</span>
        <Percent />
      </div>
      <div className="flex h-[24px] shrink-0 items-center pl-[4px]">
        <span className="w-[24px] tracking-[-0.02em]">Lock:</span>
        <Slot cls="w-[20px]"><Ico w={10} h={10} sw={1}><rect x=".5" y=".5" width="9" height="9" /><path d="M1 1h2v2H1zM5 1h2v2H5zM3 3h2v2H3zM7 3h2v2H7zM1 5h2v2H1zM5 5h2v2H5zM3 7h2v2H3zM7 7h2v2H7z" fill={G} stroke="none" /></Ico></Slot>
        <Slot cls="w-[20px]"><BrushIcon s={13} /></Slot>
        <Slot cls="w-[19px]"><MoveIcon s={11} /></Slot>
        <Slot cls="w-[20px]"><Ico w={13} h={11}><path d="M2.500 0v8.500H12M0 2.500h7.500L9.500 4.500V11M9 0v1.500M10.500 2.500H13" /></Ico></Slot>
        <Slot cls="w-[20px]"><Ico w={9} h={10}><rect x=".5" y="4.200" width="8" height="5.500" fill={G} stroke="none" /><path d="M2.300 4.500V3a2.200 2.200 0 0 1 4.400 0v1.500" /><path d="M4.500 6v2" stroke="#535353" /></Ico></Slot>
        <span className="ml-auto w-[17.500px] tracking-[-0.02em]">Fill:</span>
        <div className="mr-[4px]"><Percent /></div>
      </div>
      <div className="flex min-h-0 flex-1 bg-[#4a4a4a]">
        <div className="w-[200px] border-t border-r border-[#474747] bg-[#4e4e4e] pt-[0.500px] font-medium tracking-[-0.005em]">
          {LAYERS.map((l) => <LayerRow key={l.name} l={l} />)}
        </div>
      </div>
      <div className="flex h-[24px] shrink-0 items-center border-t border-[#424242] pl-[25.500px]">
        <Slot cls="w-[24px]"><Ico w={13} h={8} c="#969696" sw={1.200}><path d="M5.500 1.500H3.500a2.500 2.500 0 0 0 0 5h2M7.500 1.500h2a2.500 2.500 0 0 1 0 5h-2M4 4h5" /></Ico></Slot>
        <Slot cls="relative w-[25px]"><span className="font-['Open_Sans',sans-serif] text-[12px] leading-none italic">fx</span><svg width="3" height="2" className="absolute right-[3px] -bottom-[2px]"><path d="M0 0h3L1.500 2z" fill="#fff" /></svg></Slot>
        <Slot cls="w-[24px]"><Ico w={12} h={10} sw={0}><rect width="12" height="10" rx="1" fill={G} /><circle cx="6" cy="5" r="2.900" fill="#484848" /></Ico></Slot>
        <Slot cls="relative w-[24px]"><AdjustIcon /><svg width="3" height="2" className="absolute right-[3px] -bottom-[3px]"><path d="M0 0h3L1.500 2z" fill="#fff" /></svg></Slot>
        <Slot cls="w-[24px]"><Ico w={12} h={10} sw={0}><path d="M.5 1c0-.5.3-.8.8-.8h3L5.500 1.500h5.200c.5 0 .8.3.8.8V9c0 .5-.3.800-.8.800H1.300C.8 9.800.5 9.500.5 9z" fill={G} /></Ico></Slot>
        <Slot cls="w-[24px]"><Ico w={10} h={10}><path d="M1 .6h8.400v8.800H5.500L1 5.500z" fill="#2f2f2f" /><path d="M1 5.500h4.500v4z" fill={G} /></Ico></Slot>
        <Slot cls="w-[24px]"><Ico w={10} h={12} c="#b0b0b0" sw={1.200}><path d="M0 2.500h10M3.500 2V.7h3V2" /><path d="M1.200 3h7.600v8H1.200z" fill="#a0a0a0" /><path d="M3.500 4.500V10M5 4.500V10M6.500 4.500V10" stroke="#666" strokeWidth=".7" /></Ico></Slot>
      </div>
    </div>
  );
}

function RightDock() {
  const icons = [
    <Ico w={15} h={16} sw={1}><path d="M1 1h4v4H1zM1 6h4v4H1z" /><path d="M.5 11h5v4.500h-5z" fill={G} stroke="none" /><path d="M8 14c5-1 6-6 2.500-9" strokeWidth="1.800" /><path d="M7.500 1.500H13L7.500 7.500z" fill={G} stroke="none" /></Ico>,
    <Ico w={18} h={17} sw={1.100}><path d="M.8 1h6v9h-6zM11 6.500h6V16h-6zM.8 1 11 16M6.800 3 17 16M3 10l4 4h4M11 6.500l4 4" /></Ico>,
    <Ico w={15} h={15} sw={1}><path d="M5 1 8.800 2.700v4.600L5 9.300 1.200 7.300V2.700zM1.200 2.700 5 4.500l3.800-1.800M5 4.500v4.800" /><path d="M11 1h3.500v3.500H11zM11 5.800h3.500v3.500H11zM.5 11h14v3.500H.5z" fill={G} stroke="none" /><path d="M8.500 12h4l-2 1.500z" fill="#535353" stroke="none" /></Ico>,
  ];
  return (
    <div className="flex min-w-0 flex-1 flex-col bg-[#3c3c3c]">
      <div className="flex h-[10px] shrink-0 items-center justify-between bg-[#424242] pr-[6px] pl-[22px]"><DoubleAngle left /><DoubleAngle /></div>
      <div className="flex min-h-0 flex-1">
        <div className="flex w-[37px] shrink-0 flex-col border-r-[3px] border-l border-r-[#3c3c3c] border-l-[#444] bg-[#535353]">
          {icons.map((ic, i) => (
            <div key={i} className="flex h-[36.500px] shrink-0 flex-col items-center border-b border-[#3a3a3a] pt-[3px] pl-[1px]">
              <Grip />
              <div className="flex flex-1 items-center">{ic}</div>
            </div>
          ))}
        </div>
        <div className="flex min-w-0 flex-1 flex-col border-r border-[#444]">
          <PanelTabs tabs={[{ label: "Color", cls: "w-[40px]" }, { label: "Swatches", cls: "w-[58px]" }]} />
          <ColorPanel />
          <div className="h-[3px] shrink-0 bg-[#3c3c3c]" />
          <PanelTabs tabs={[{ label: "Libraries", cls: "w-[56px]" }, { label: "Adjustments", cls: "w-[73px]" }]} />
          <div className="h-[4px] shrink-0 bg-[#3c3c3c]" />
          <PanelTabs tabs={[{ label: "Layers", cls: "w-[46px]" }, { label: "Channels", cls: "w-[57px]" }, { label: "Paths", cls: "w-[41px]" }]} />
          <LayersPanel />
        </div>
      </div>
    </div>
  );
}

export default function App() {
  return (
    <div className="h-[784px] w-[1200px] overflow-hidden bg-white pt-[28px] pl-[50px]">
      <div className="h-[685px] w-[1100px] rounded-t-[5px] shadow-[0_22px_40px_rgba(0,0,0,0.5)]">
        <div className="flex h-full flex-col overflow-hidden rounded-t-[5px] border-b border-[#444] bg-[#3c3c3c]">
          <div className="grid h-[21px] shrink-0 grid-cols-[1fr_auto_1fr] items-center border-t border-b border-t-[#666] border-b-[#3d3d3d] bg-[#535353]">
            <div className="flex gap-[7px] pt-[3px] pl-[8px]">
              <div className="h-[11px] w-[11px] rounded-full bg-[#fc5b57]" />
              <div className="h-[11px] w-[11px] rounded-full bg-[#fdbc40]" />
              <div className="h-[11px] w-[11px] rounded-full bg-[#34c84a]" />
            </div>
            <div className="pt-[4px] font-[Inter,sans-serif] text-[11.600px] leading-[14px] text-[#e6e6e6]">Adobe Photoshop CC 2017</div>
          </div>
          <OptionsBar />
          <div className="flex min-h-0 flex-1">
            <Toolbar />
            <DocumentArea />
            <RightDock />
          </div>
        </div>
      </div>
    </div>
  );
}
